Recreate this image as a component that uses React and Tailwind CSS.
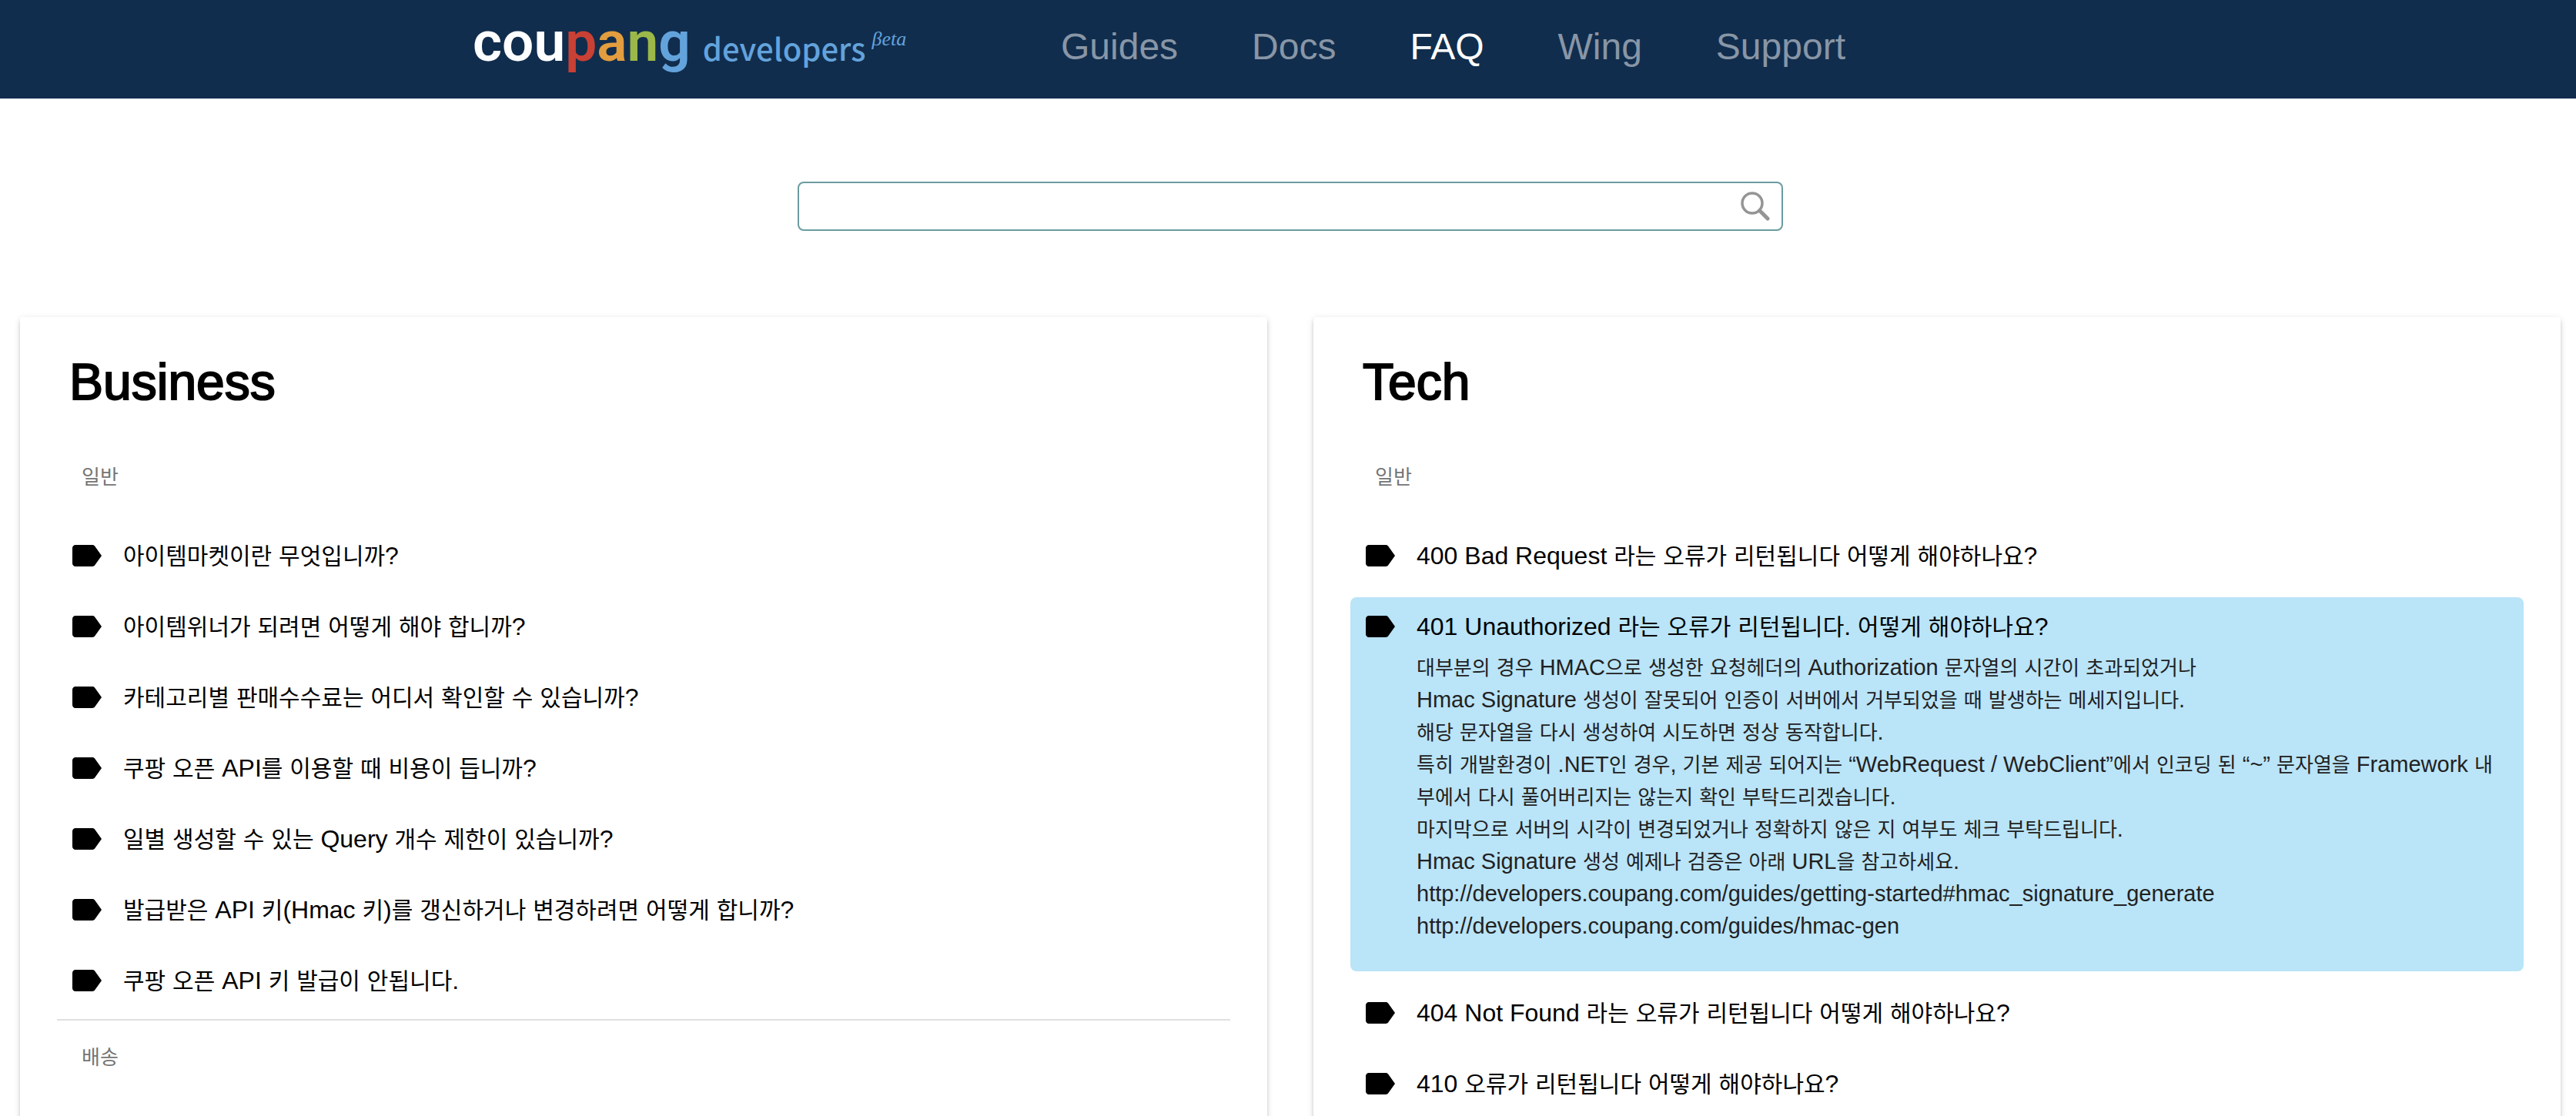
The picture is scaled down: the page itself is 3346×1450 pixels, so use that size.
import React from "react";
import { MdLabel } from "react-icons/md";

const NAV = [
  { label: "Guides" },
  { label: "Docs" },
  { label: "FAQ", active: true },
  { label: "Wing" },
  { label: "Support" },
];

const BUSINESS = [
  "아이템마켓이란 무엇입니까?",
  "아이템위너가 되려면 어떻게 해야 합니까?",
  "카테고리별 판매수수료는 어디서 확인할 수 있습니까?",
  "쿠팡 오픈 API를 이용할 때 비용이 듭니까?",
  "일별 생성할 수 있는 Query 개수 제한이 있습니까?",
  "발급받은 API 키(Hmac 키)를 갱신하거나 변경하려면 어떻게 합니까?",
  "쿠팡 오픈 API 키 발급이 안됩니다.",
];

const ANSWER = [
  "대부분의 경우 HMAC으로 생성한 요청헤더의 Authorization 문자열의 시간이 초과되었거나",
  "Hmac Signature 생성이 잘못되어 인증이 서버에서 거부되었을 때 발생하는 메세지입니다.",
  "해당 문자열을 다시 생성하여 시도하면 정상 동작합니다.",
  "특히 개발환경이 .NET인 경우, 기본 제공 되어지는 “WebRequest / WebClient”에서 인코딩 된 “~” 문자열을 Framework 내",
  "부에서 다시 풀어버리지는 않는지 확인 부탁드리겠습니다.",
  "마지막으로 서버의 시각이 변경되었거나 정확하지 않은 지 여부도 체크 부탁드립니다.",
  "Hmac Signature 생성 예제나 검증은 아래 URL을 참고하세요.",
  "http://developers.coupang.com/guides/getting-started#hmac_signature_generate",
  "http://developers.coupang.com/guides/hmac-gen",
];

const TECH = [
  { q: "400 Bad Request 라는 오류가 리턴됩니다 어떻게 해야하나요?" },
  { q: "401 Unauthorized 라는 오류가 리턴됩니다. 어떻게 해야하나요?", a: ANSWER },
  { q: "404 Not Found 라는 오류가 리턴됩니다 어떻게 해야하나요?" },
  { q: "410 오류가 리턴됩니다 어떻게 해야하나요?" },
];

/* Hangul sits slightly smaller than the Latin text around it. */
function Mixed({ text, hangul }) {
  return text.split(/([가-힣]+)/).map((run, i) =>
    i % 2 ? (
      <span key={i} className={hangul}>
        {run}
      </span>
    ) : (
      run
    )
  );
}

function Logo() {
  return (
    <a href="#home" className="flex w-[564px] shrink-0 items-baseline whitespace-nowrap pb-5">
      <span className="font-['Roboto',sans-serif] text-[73px] font-semibold leading-[80px] text-white">
        cou<span className="text-[#c94034]">p</span>
        <span className="text-[#e29d3e]">a</span>
        <span className="text-[#9bb849]">n</span>
        <span className="text-[#63a3dc]">g</span>
      </span>
      <span className="ml-4 font-['Noto_Sans_CJK_KR',sans-serif] text-[40px] font-medium leading-[48px] text-[#63a3dc]">
        developers
      </span>
      <sup className="-top-5 ml-2 font-['Liberation_Serif',serif] text-[26px] italic leading-none text-[#63a3dc]">
        βeta
      </sup>
    </a>
  );
}

function Question({ item, open }) {
  return (
    <li className={open ? "rounded-lg bg-[#bae4f8] p-3.5" : "p-3.5"}>
      <button type="button" className="flex w-full items-center gap-6 text-left text-[32px] leading-[48px] text-black">
        <MdLabel className="size-12 shrink-0" />
        <span>
          <Mixed text={item.q} hangul="text-[30px] leading-none" />
        </span>
      </button>
      {open && (
        <div className="mt-2 mb-6 pl-[72px] text-[29px] leading-[42px] text-[#212121]">
          {item.a.map((line) => (
            <p key={line}>
              <Mixed text={line} hangul="text-[26px] leading-none" />
            </p>
          ))}
        </div>
      )}
    </li>
  );
}

function Section({ name, items }) {
  return (
    <section>
      <h2 className="pl-8 text-[26px] leading-[96px] text-[#757575]">{name}</h2>
      {items.length > 0 && (
        <ul className="mb-3 flex flex-col gap-4 pt-4">
          {items.map((item) => (
            <Question key={item.q} item={item} open={Boolean(item.a)} />
          ))}
        </ul>
      )}
    </section>
  );
}

function Card({ title, children }) {
  return (
    <article className="rounded-sm bg-white px-12 pt-12 shadow-[0_4px_4px_rgba(0,0,0,0.14),0_6px_2px_-4px_rgba(0,0,0,0.2),0_2px_10px_rgba(0,0,0,0.12)]">
      <h1 className="mb-10 pl-4 text-[66px] leading-[72px] text-black [-webkit-text-stroke:2px_black]">{title}</h1>
      {children}
    </article>
  );
}

export default function App() {
  return (
    <div className="flex h-screen flex-col overflow-hidden bg-white font-['Liberation_Sans','Noto_Sans_CJK_KR',sans-serif]">
      <header className="flex h-32 shrink-0 items-center bg-[#112d4d] pl-[614px]">
        <Logo />
        <nav className="ml-[200px] flex gap-24 pb-1.5 text-[48px] leading-[56px]">
          {NAV.map((n) => (
            <a key={n.label} href={`#${n.label}`} className={n.active ? "text-white" : "text-[#8896a6]"}>
              {n.label}
            </a>
          ))}
        </nav>
      </header>

      <div className="flex flex-1 flex-col pr-5 pl-[26px]">
        <form
          role="search"
          className="mx-auto mt-27 mb-28 flex h-16 w-full max-w-[1280px] shrink-0 items-center rounded-lg border-2 border-[#6a9c9f] pr-3.5 pl-4"
        >
          <input type="search" aria-label="FAQ 검색" className="h-full flex-1 text-[32px] outline-none" />
          <button type="button" aria-label="검색">
            <svg viewBox="0 0 40 40" className="size-10" fill="none" stroke="#959595">
              <circle cx="16" cy="16" r="13" strokeWidth="3.5" />
              <path d="M25.500 25.500L36 36" strokeWidth="5" strokeLinecap="round" />
            </svg>
          </button>
        </form>

        <main className="grid flex-1 grid-cols-2 gap-[60px]">
          <Card title="Business">
            <Section name="일반" items={BUSINESS.map((q) => ({ q }))} />
            <hr className="border-t-2 border-[#e0e0e0]" />
            <Section name="배송" items={[]} />
          </Card>
          <Card title="Tech">
            <Section name="일반" items={TECH} />
          </Card>
        </main>
      </div>
    </div>
  );
}
